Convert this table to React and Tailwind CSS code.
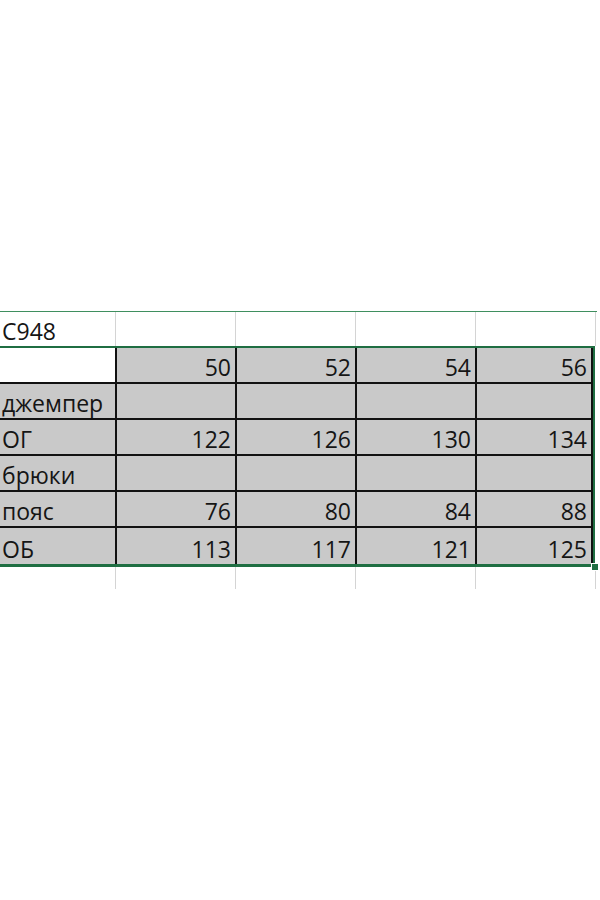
const GREEN = 'border-[#1f6e42]'

const sizes = ['50', '52', '54', '56']
const rows = [
  { label: 'джемпер', values: ['', '', '', ''] },
  { label: 'ОГ', values: ['122', '126', '130', '134'] },
  { label: 'брюки', values: ['', '', '', ''] },
  { label: 'пояс', values: ['76', '80', '84', '88'] },
  { label: 'ОБ', values: ['113', '117', '121', '125'] },
]

const colW = ['w-[117px]', 'w-[120px]', 'w-[120px]', 'w-[120px]', 'w-[116px]']

function Cell({ width, gray, right, text }) {
  return (
    <div
      className={`${width} h-full flex items-end border-r-2 border-[#111] ${gray ? 'bg-[#c9c9c9]' : 'bg-white'} ${
        right ? 'justify-end pr-[4px]' : 'pl-[2px]'
      } pb-[3px]`}
    >
      <span className="leading-none">{text}</span>
    </div>
  )
}

function Row({ label, values, firstWhite, last }) {
  return (
    <div className={`flex h-[36px] ${last ? '' : 'border-b-2 border-[#111]'}`}>
      <Cell width={colW[0]} gray={!firstWhite} text={label} />
      {values.map((v, i) => (
        <Cell key={i} width={colW[i + 1]} gray right text={v} />
      ))}
    </div>
  )
}

export default function App() {
  return (
    <div
      className="w-[600px] h-[900px] bg-white text-[23px] font-medium text-[#151515]"
      style={{ fontFamily: '"Open Sans", "Liberation Sans", sans-serif' }}
    >
      <div className="h-[311px]" />
      <div className="h-px bg-[#3f8f5f] w-[597px]" />

      {/* top row: style code */}
      <div className="flex h-[34px]">
        <div className="w-[116px] border-r border-[#d4d4d4] flex items-end pl-[2px] pb-[3px]">
          <span className="leading-none">C948</span>
        </div>
        <div className="w-[120px] border-r border-[#d4d4d4]" />
        <div className="w-[120px] border-r border-[#d4d4d4]" />
        <div className="w-[120px] border-r border-[#d4d4d4]" />
        <div className="w-[120px] border-r border-[#d4d4d4]" />
      </div>

      {/* selected size table */}
      <div className="relative w-[595px]">
        <div className={`border-t-2 border-b-[3px] border-r-2 ${GREEN}`}>
          <Row label="" values={sizes} firstWhite />
          {rows.map((r, i) => (
            <Row key={r.label} label={r.label} values={r.values} last={i === rows.length - 1} />
          ))}
        </div>
        <div className="absolute right-[-4px] bottom-[-4px] w-[8px] h-[8px] bg-[#1f6e42] border border-white" />
      </div>

      {/* partial next row */}
      <div className="flex h-[22px]">
        <div className="w-[116px] border-r border-[#d4d4d4]" />
        <div className="w-[120px] border-r border-[#d4d4d4]" />
        <div className="w-[120px] border-r border-[#d4d4d4]" />
        <div className="w-[120px] border-r border-[#d4d4d4]" />
        <div className="w-[120px] border-r border-[#d4d4d4]" />
      </div>
    </div>
  )
}
